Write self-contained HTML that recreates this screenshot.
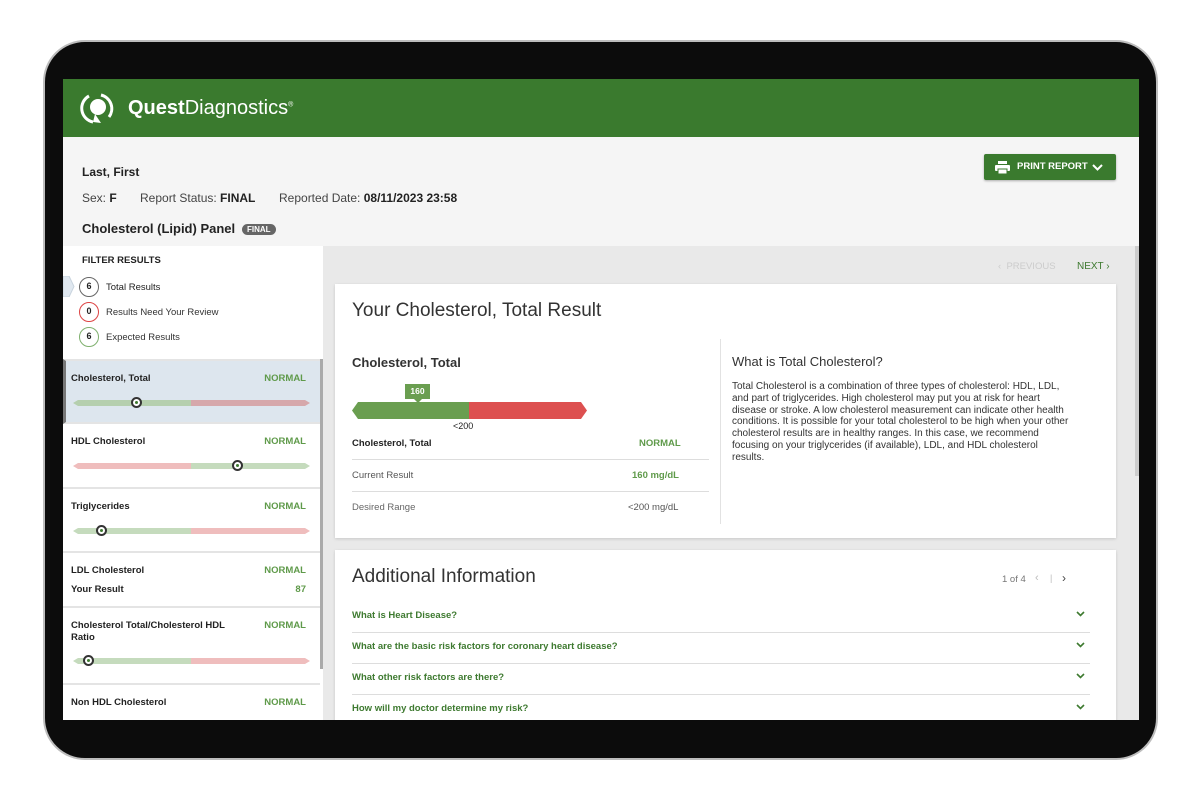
<!DOCTYPE html>
<html><head><meta charset="utf-8"><style>
*{margin:0;padding:0;box-sizing:border-box}
body{width:1200px;height:800px;background:#fff;position:relative;overflow:hidden;font-family:"Liberation Sans",sans-serif;color:#222}
.a{position:absolute}
.frame{left:43px;top:40px;width:1115px;height:720px;background:#0c0c0c;border-radius:42px;border:2px solid #bdbdbd}
.screen{left:63px;top:79px;width:1076px;height:641px;background:#e9e9e9;overflow:hidden}
.b{font-weight:bold}
.g{color:#5f9a4a;font-weight:bold}
.bar{position:absolute;height:6px;left:10px;width:237px}
.bar i{position:absolute;top:0;height:6px}
.mk{position:absolute;width:11px;height:11px;border-radius:50%;border:2px solid #333;background:#fff;top:-3px}
.mk:after{content:"";position:absolute;left:2px;top:2px;width:3px;height:3px;border-radius:50%;background:#3e7a30}
.item{position:absolute;left:0;width:257px;border-bottom:2px solid #e4e4e4;background:#fff;font-size:9.5px}
.circ{position:absolute;width:20px;height:20px;border-radius:50%;border:1.5px solid #666;font-size:9px;font-weight:bold;text-align:center;line-height:17px;background:#fff}
.qt{position:absolute;left:17px;font-size:9.5px;color:#3e7a30;font-weight:bold}
.qc{position:absolute;left:741px}
.ql{position:absolute;left:17px;width:738px;height:1px;background:#ddd}
</style></head><body>
<div class="a frame"></div>
<div class="a screen">
 <div class="a" style="left:0;top:0;width:1076px;height:58px;background:#3a7a2e"></div>
 <svg class="a" style="left:16px;top:10px" width="38" height="38" viewBox="0 0 38 38"><path d="M10 7 A14 14 0 0 0 14 33" stroke="#fff" stroke-width="3" fill="none"/><path d="M22 6 A14 14 0 0 1 30 28" stroke="#fff" stroke-width="3" fill="none"/><circle cx="19" cy="18" r="8" fill="#fff"/><path d="M16 25 L22 34 L14 33Z" fill="#fff"/></svg>
 <div class="a" style="left:65px;top:18px;color:#fff;font-size:20px"><b>Quest</b><span style="font-weight:normal">Diagnostics</span><sup style="font-size:7px">®</sup></div>
 <div class="a" style="left:0;top:58px;width:1076px;height:109px;background:#f5f5f5"></div>
 <div class="a b" style="left:19px;top:86px;font-size:12px">Last, First</div>
 <div class="a" style="left:19px;top:112px;font-size:12px;color:#444">Sex: <b style="color:#222">F</b></div>
 <div class="a" style="left:77px;top:112px;font-size:12px;color:#444">Report Status: <b style="color:#222">FINAL</b></div>
 <div class="a" style="left:216px;top:112px;font-size:12px;color:#444">Reported Date: <b style="color:#222">08/11/2023 23:58</b></div>
 <div class="a b" style="left:19px;top:142px;font-size:13px">Cholesterol (Lipid) Panel</div>
 <div class="a b" style="left:179px;top:145px;font-size:8px;color:#fff;background:#666;border-radius:7px;padding:1px 5px">FINAL</div>
 <div class="a b" style="left:921px;top:75px;width:132px;height:26px;background:#3a7a2e;border-radius:2px;color:#fff;font-size:9.5px;line-height:26px;padding-left:33px;box-shadow:0 1px 2px rgba(0,0,0,.3)">PRINT REPORT</div>
 <svg class="a" style="left:1029px;top:85px" width="11" height="7" viewBox="0 0 11 7"><path d="M1 1 L5.5 5.5 L10 1" stroke="#fff" stroke-width="2" fill="none"/></svg>
 <svg class="a" style="left:932px;top:82px" width="15" height="13" viewBox="0 0 15 13"><rect x="3" y="0" width="9" height="3" fill="#fff"/><rect x="0" y="4" width="15" height="6" rx="1" fill="#fff"/><rect x="3" y="8" width="9" height="5" fill="#fff" stroke="#3a7a2e"/></svg>
 <!-- sidebar -->
 <div class="a" style="left:0;top:167px;width:260px;height:474px;background:#fff">
  <div class="a b" style="left:19px;top:9px;font-size:9.5px">FILTER RESULTS</div>
  <svg class="a" style="left:0;top:30px" width="12" height="21" viewBox="0 0 12 21"><path d="M0 0 L6 0 L11 10.5 L6 21 L0 21Z" fill="#e0e8f0" stroke="#c9d4de"/></svg>
  <div class="circ" style="left:16px;top:31px">6</div><div class="a" style="left:43px;top:36px;font-size:9.5px">Total Results</div>
  <div class="circ" style="left:16px;top:56px;border-color:#d44">0</div><div class="a" style="left:43px;top:61px;font-size:9.5px;color:#333">Results Need Your Review</div>
  <div class="circ" style="left:16px;top:81px;border-color:#7fb06e">6</div><div class="a" style="left:43px;top:86px;font-size:9.5px;color:#333">Expected Results</div>
  <div class="item" style="top:113px;height:65px;background:#dde6ee;border-top:2px solid #e4e4e4;border-left:3px solid #777"><div class="a b" style="left:5px;top:12px">Cholesterol, Total</div><div class="a g" style="right:14px;top:12px">NORMAL</div><div class="bar" style="top:39px;left:7px"><i style="left:0;width:118px;background:#b5cfae;clip-path:polygon(0 50%,5px 0,100% 0,100% 100%,5px 100%)"></i><i style="left:118px;width:119px;background:#d6a8ab;clip-path:polygon(0 0,calc(100% - 5px) 0,100% 50%,calc(100% - 5px) 100%,0 100%)"></i><span class="mk" style="left:58px"></span></div></div>
  <div class="item" style="top:178px;height:65px"><div class="a b" style="left:8px;top:12px">HDL Cholesterol</div><div class="a g" style="right:14px;top:12px">NORMAL</div><div class="bar" style="top:39px"><i style="left:0;width:118px;background:#efbdbd;clip-path:polygon(0 50%,5px 0,100% 0,100% 100%,5px 100%)"></i><i style="left:118px;width:119px;background:#c5dbbd;clip-path:polygon(0 0,calc(100% - 5px) 0,100% 50%,calc(100% - 5px) 100%,0 100%)"></i><span class="mk" style="left:159px"></span></div></div>
  <div class="item" style="top:243px;height:64px"><div class="a b" style="left:8px;top:12px">Triglycerides</div><div class="a g" style="right:14px;top:12px">NORMAL</div><div class="bar" style="top:39px"><i style="left:0;width:118px;background:#c5dbbd;clip-path:polygon(0 50%,5px 0,100% 0,100% 100%,5px 100%)"></i><i style="left:118px;width:119px;background:#efbdbd;clip-path:polygon(0 0,calc(100% - 5px) 0,100% 50%,calc(100% - 5px) 100%,0 100%)"></i><span class="mk" style="left:23px"></span></div></div>
  <div class="item" style="top:307px;height:55px"><div class="a b" style="left:8px;top:12px">LDL Cholesterol</div><div class="a g" style="right:14px;top:12px">NORMAL</div><div class="a b" style="left:8px;top:31px">Your Result</div><div class="a g" style="right:14px;top:31px">87</div></div>
  <div class="item" style="top:362px;height:77px"><div class="a b" style="left:8px;top:12px;line-height:12px;width:170px">Cholesterol Total/Cholesterol HDL Ratio</div><div class="a g" style="right:14px;top:12px">NORMAL</div><div class="bar" style="top:50px"><i style="left:0;width:118px;background:#c5dbbd;clip-path:polygon(0 50%,5px 0,100% 0,100% 100%,5px 100%)"></i><i style="left:118px;width:119px;background:#efbdbd;clip-path:polygon(0 0,calc(100% - 5px) 0,100% 50%,calc(100% - 5px) 100%,0 100%)"></i><span class="mk" style="left:10px"></span></div></div>
  <div class="item" style="top:439px;height:40px;border:none"><div class="a b" style="left:8px;top:12px">Non HDL Cholesterol</div><div class="a g" style="right:14px;top:12px">NORMAL</div></div>
  <div class="a" style="left:257px;top:113px;width:3px;height:310px;background:#aaa"></div>
 </div>
 <div class="a" style="left:1072px;top:167px;width:4px;height:230px;background:#ccc"></div>
 <div class="a" style="left:935px;top:182px;font-size:9.5px;color:#ccc">‹ &nbsp;PREVIOUS</div>
 <div class="a" style="left:1014px;top:182px;font-size:10px;color:#3e7a30">NEXT ›</div>
 <!-- card 1 -->
 <div class="a" style="left:272px;top:205px;width:781px;height:254px;background:#fff;box-shadow:0 1px 3px rgba(0,0,0,.15)">
  <div class="a" style="left:17px;top:16px;font-size:19px;color:#333">Your Cholesterol, Total Result</div>
  <div class="a b" style="left:17px;top:71px;font-size:13px;color:#333">Cholesterol, Total</div>
  <div class="a b" style="left:70px;top:100px;width:25px;height:15px;background:#6a9e50;color:#fff;font-size:8.5px;text-align:center;line-height:15px">160</div>
  <div class="a" style="left:79px;top:115px;width:8px;height:4px;background:#6a9e50;clip-path:polygon(0 0,100% 0,50% 100%)"></div>
  <div class="a" style="left:17px;top:118px;width:117px;height:17px;background:#6a9e50;clip-path:polygon(0 50%,6px 0,100% 0,100% 100%,6px 100%)"></div>
  <div class="a" style="left:134px;top:118px;width:118px;height:17px;background:#dd5050;clip-path:polygon(0 0,calc(100% - 6px) 0,100% 50%,calc(100% - 6px) 100%,0 100%)"></div>
  <div class="a" style="left:118px;top:137px;font-size:9px">&lt;200</div>
  <div class="a b" style="left:17px;top:154px;font-size:9.5px">Cholesterol, Total</div>
  <div class="a g" style="left:304px;top:154px;font-size:9.5px">NORMAL</div>
  <div class="a" style="left:17px;top:175px;width:357px;height:1px;background:#ddd"></div>
  <div class="a" style="left:17px;top:186px;font-size:9.5px;color:#555">Current Result</div>
  <div class="a g" style="left:297px;top:186px;font-size:9.5px">160 mg/dL</div>
  <div class="a" style="left:17px;top:207px;width:357px;height:1px;background:#ddd"></div>
  <div class="a" style="left:17px;top:218px;font-size:9.5px;color:#666">Desired Range</div>
  <div class="a" style="left:293px;top:218px;font-size:9.5px;color:#555">&lt;200 mg/dL</div>
  <div class="a" style="left:385px;top:55px;width:1px;height:185px;background:#e2e2e2"></div>
  <div class="a" style="left:397px;top:70px;font-size:13px;color:#333">What is Total Cholesterol?</div>
  <div class="a" style="left:397px;top:97px;width:348px;font-size:10px;line-height:11.8px;color:#333">Total Cholesterol is a combination of three types of cholesterol: HDL, LDL,<br>and part of triglycerides. High cholesterol may put you at risk for heart<br>disease or stroke. A low cholesterol measurement can indicate other health<br>conditions. It is possible for your total cholesterol to be high when your other<br>cholesterol results are in healthy ranges. In this case, we recommend<br>focusing on your triglycerides (if available), LDL, and HDL cholesterol<br>results.</div>
 </div>
 <!-- card 2 -->
 <div class="a" style="left:272px;top:471px;width:781px;height:190px;background:#fff;box-shadow:0 1px 3px rgba(0,0,0,.15)">
  <div class="a" style="left:17px;top:16px;font-size:19px;color:#333">Additional Information</div>
  <div class="a" style="left:667px;top:24px;font-size:9.5px;color:#777">1 of 4</div>
  <div class="a" style="left:700px;top:22px;font-size:11px;color:#bbb">‹</div>
  <div class="a" style="left:715px;top:23px;font-size:9px;color:#bbb">|</div>
  <div class="a" style="left:727px;top:21px;font-size:12px;color:#444">›</div>
  <div class="qt" style="top:60px">What is Heart Disease?</div>
  <div class="qt" style="top:91px">What are the basic risk factors for coronary heart disease?</div>
  <div class="qt" style="top:122px">What other risk factors are there?</div>
  <div class="qt" style="top:153px">How will my doctor determine my risk?</div>
  <div class="ql" style="top:82px"></div><div class="ql" style="top:113px"></div><div class="ql" style="top:144px"></div>
  <svg class="qc" style="top:61px" width="9" height="6" viewBox="0 0 9 6"><path d="M1 1L4.5 4.5L8 1" stroke="#3e7a30" stroke-width="1.6" fill="none"/></svg>
  <svg class="qc" style="top:92px" width="9" height="6" viewBox="0 0 9 6"><path d="M1 1L4.5 4.5L8 1" stroke="#3e7a30" stroke-width="1.6" fill="none"/></svg>
  <svg class="qc" style="top:123px" width="9" height="6" viewBox="0 0 9 6"><path d="M1 1L4.5 4.5L8 1" stroke="#3e7a30" stroke-width="1.6" fill="none"/></svg>
  <svg class="qc" style="top:154px" width="9" height="6" viewBox="0 0 9 6"><path d="M1 1L4.5 4.5L8 1" stroke="#3e7a30" stroke-width="1.6" fill="none"/></svg>
 </div>
</div>
</body></html>
